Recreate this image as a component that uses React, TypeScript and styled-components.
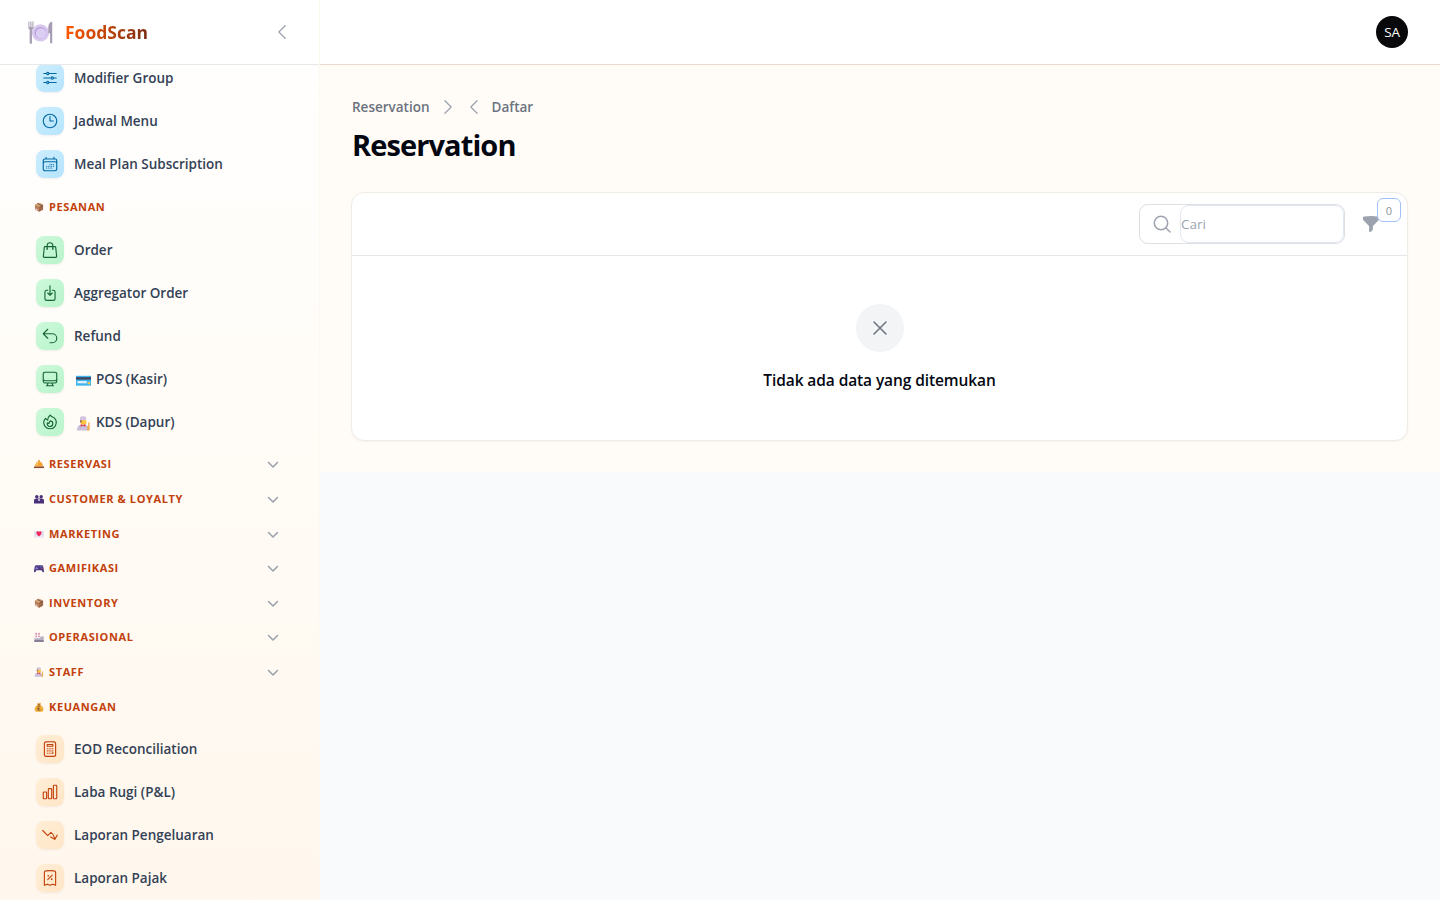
import React from 'react';
import styled, { createGlobalStyle, css } from 'styled-components';
import {
  HiOutlineAdjustmentsHorizontal,
  HiOutlineClock,
  HiOutlineCalendarDays,
  HiOutlineShoppingBag,
  HiOutlineArrowDownOnSquare,
  HiOutlineArrowUturnLeft,
  HiOutlineComputerDesktop,
  HiOutlineFire,
  HiOutlineCalculator,
  HiOutlineChartBar,
  HiOutlineArrowTrendingDown,
  HiOutlineReceiptPercent,
  HiOutlineChevronLeft,
  HiOutlineXMark,
  HiChevronDown,
  HiChevronLeft,
  HiChevronRight,
  HiFunnel,
} from 'react-icons/hi2';

const Global = createGlobalStyle`
  *, *::before, *::after { box-sizing: border-box; }
  html, body { margin: 0; height: 100%; overflow: hidden; }
  body {
    background: #f8fafc;
    font-family: 'Open Sans', 'Noto Sans', sans-serif;
    color: #030712;
  }
  button, input { font-family: inherit; }
`;

const Shell = styled.div`
  display: flex;
  width: 1440px;
  height: 900px;
  overflow: hidden;
`;

const Sidebar = styled.aside`
  display: flex;
  flex-direction: column;
  flex: 0 0 320px;
  border-right: 1px solid #fdf8f0;
  background: linear-gradient(180deg, #ffffff 0%, #fffcf7 45%, #fff7ed 100%);
`;

const SidebarHeader = styled.header`
  display: flex;
  align-items: center;
  flex: 0 0 65px;
  padding: 0 27px 0 28px;
  background: #fff;
  border-bottom: 1px solid #e8e8ea;
`;

const Brand = styled.span<{ $tracking: string }>`
  margin: 0 auto 0 12px;
  font-size: 17.5px;
  line-height: 28px;
  font-weight: 700;
  letter-spacing: ${(p) => p.$tracking};
  background: linear-gradient(90deg, #ff5a00, #7c2d12);
  background-clip: text;
  -webkit-background-clip: text;
  color: transparent;
`;

const CollapseButton = styled.button`
  display: flex;
  padding: 0;
  border: 0;
  background: none;
  color: #9ca3af;
`;

const Nav = styled.nav`
  flex: 1;
  min-height: 0;
  overflow: hidden;
`;

const NavScroll = styled.div`
  margin-top: -8.5px;
`;

const ItemList = styled.div`
  padding-bottom: 4px;
`;

const NavItem = styled.a`
  display: flex;
  align-items: center;
  height: 43px;
  padding-left: 36px;
  gap: 10px;
`;

type Tone = 'sky' | 'green' | 'orange';

const tones = {
  sky: css`background: linear-gradient(135deg, #cdeefe, #b5e4fd); color: #0369a1;`,
  green: css`background: linear-gradient(135deg, #cdf9db, #b9f4cc); color: #166534;`,
  orange: css`background: linear-gradient(135deg, #ffeed6, #ffe5c6); color: #c2410c;`,
};

const IconTile = styled.span<{ $tone: Tone }>`
  display: flex;
  align-items: center;
  justify-content: center;
  width: 28px;
  height: 28px;
  border-radius: 8px;
  box-shadow: 0 1px 2px rgba(120, 60, 20, 0.08);
  ${(p) => tones[p.$tone]}
`;

const ItemLabel = styled.span<{ $tracking?: number }>`
  display: flex;
  align-items: center;
  font-size: 13.5px;
  line-height: 20px;
  font-weight: 600;
  color: #334155;
  white-space: nowrap;
  letter-spacing: ${(p) => p.$tracking ?? 0}px;
`;

const InlineEmoji = styled.span`
  display: flex;
  margin: 3px 5px 0 2px;
`;

const GroupHeader = styled.div`
  display: flex;
  align-items: center;
  height: 34.6px;
  padding: 0 40px 0 34px;
`;

const GroupLabel = styled.span<{ $tracking?: number }>`
  margin: 0 auto 0 5px;
  font-size: 11px;
  line-height: 16px;
  font-weight: 700;
  color: #c2410c;
  white-space: nowrap;
  letter-spacing: ${(p) => p.$tracking ?? 0.6}px;
`;

const GroupChevron = styled.span`
  display: flex;
  margin-top: 2px;
  color: #9ca3af;
`;

const Main = styled.main`
  flex: 1;
  min-width: 0;
`;

const Topbar = styled.header`
  display: flex;
  align-items: center;
  justify-content: flex-end;
  height: 65px;
  padding: 0 32px;
  background: #fff;
  border-bottom: 1px solid #ead9d0;
`;

const Avatar = styled.span`
  display: flex;
  align-items: center;
  justify-content: center;
  width: 32px;
  height: 32px;
  border-radius: 50%;
  background: #09090b;
  color: #fff;
  font-size: 13.5px;
  letter-spacing: -0.2px;
`;

const Content = styled.section`
  height: 407px;
  padding: 32px 32px 0 31px;
  background: #fffcf7;
`;

const Breadcrumbs = styled.div`
  display: flex;
  align-items: center;
  height: 20px;
  padding-left: 1px;
  color: #9ca3af;
`;

const Crumb = styled.span<{ $tracking: number }>`
  font-size: 13.5px;
  line-height: 20px;
  font-weight: 600;
  color: #6b7280;
  letter-spacing: ${(p) => p.$tracking}px;
`;

const CrumbArrows = styled.span`
  display: flex;
  gap: 6px;
  margin: 0 8px;
`;

const Title = styled.h1`
  margin: 10px 0 0 1px;
  font-size: 29px;
  line-height: 36px;
  font-weight: 700;
  letter-spacing: -0.9px;
`;

const Card = styled.div`
  height: 249px;
  margin-top: 29px;
  background: #fff;
  border: 1px solid #f1ebe6;
  border-radius: 13px;
  box-shadow: 0 1px 2px rgba(0, 0, 0, 0.04);
`;

const Toolbar = styled.div`
  display: flex;
  align-items: center;
  justify-content: flex-end;
  height: 63px;
  padding: 0 26px 0 0;
  border-bottom: 1px solid #e5e7eb;
`;

const SearchBox = styled.label`
  display: flex;
  align-items: center;
  width: 206px;
  height: 40px;
  margin-right: 16px;
  border: 1px solid #dcdfe4;
  border-radius: 9px;
  color: #9ca3af;
  svg { margin: 0 8px 0 12px; }
`;

const SearchInput = styled.input`
  flex: 1;
  width: 0;
  height: 38px;
  padding: 0;
  border: 1px solid #e2e8f0;
  border-radius: 9px;
  outline: 0;
  background: #fff;
  font-size: 13.5px;
  color: #030712;
  &::placeholder { color: #9ca3af; opacity: 1; }
`;

const FilterButton = styled.button`
  position: relative;
  display: flex;
  padding: 0;
  border: 0;
  background: none;
  color: #9ca3af;
`;

const FilterBadge = styled.span`
  position: absolute;
  left: 16px;
  top: -16px;
  display: flex;
  align-items: center;
  justify-content: center;
  width: 24px;
  height: 24px;
  border: 1px solid #a3c1fb;
  border-radius: 6px;
  background: #fff;
  font-size: 11px;
  color: #8b919d;
`;

const Empty = styled.div`
  display: flex;
  flex-direction: column;
  align-items: center;
  padding-top: 48px;
`;

const EmptyIcon = styled.span`
  display: flex;
  align-items: center;
  justify-content: center;
  width: 48px;
  height: 48px;
  border-radius: 50%;
  background: #f3f4f6;
  color: #6b7280;
`;

const EmptyText = styled.p`
  margin: 16px 0 0;
  font-size: 15.5px;
  line-height: 24px;
  font-weight: 600;
  letter-spacing: -0.1px;
`;

type EmojiName =
  | 'plate' | 'box' | 'bell' | 'people' | 'letter' | 'game' | 'factory' | 'chef' | 'money' | 'card';

const emojiArt: Record<EmojiName, React.ReactNode> = {
  plate: (
    <>
      <circle cx="16" cy="16.5" r="11" fill="#d8c8ee" />
      <circle cx="16" cy="16.5" r="7.6" fill="#b9a2dc" />
      <circle cx="16.6" cy="17.2" r="6.6" fill="#dccdf3" />
      <path d="M0.5 2v8q0 2 1.6 2.6V29a1.5 1.5 0 0 0 3 0V12.600q1.900-.6 1.900-2.600V2H5.600v7H4.400V2H3v7H1.800V2z" fill="#aaa0b4" />
      <path d="M31 2q-5 1-5 8v7h2.300v12a1.400 1.400 0 0 0 2.700 0z" fill="#a79bb3" />
    </>
  ),
  box: (
    <>
      <path d="M3 9 15 2l14 6v16l-13 7L3 24z" fill="#b98058" />
      <path d="M3 9 15 2l14 6-13 7z" fill="#d9a77d" />
      <path d="M16 15 29 8v16l-13 7z" fill="#a06a4c" />
      <path d="m9 5.500 13 6v6l4-2V10L13 4z" fill="#79513f" />
      <path d="M5 20l6 3v5l-6-3z" fill="#e8cfe4" />
    </>
  ),
  bell: (
    <>
      <circle cx="16" cy="6" r="3" fill="#dd8a24" />
      <path d="M3 24C4 13 9 8 16 8s12 5 13 16z" fill="#f7a333" />
      <path d="M7 20c1-6 3-9 7-10-2 4-2 7-2 10z" fill="#ffd07a" />
      <path d="M0 24h32v5H0z" fill="#8d4a2c" />
    </>
  ),
  people: (
    <>
      <circle cx="9" cy="9" r="5.500" fill="#4b2f78" />
      <circle cx="23" cy="9" r="5.500" fill="#4b2f78" />
      <path d="M0 30V20q0-6 8-6h16q8 0 8 6v10z" fill="#48307a" />
      <path d="M14 16h4v6h-4z" fill="#fff" />
    </>
  ),
  letter: (
    <>
      <path d="M1 6h30v21H1z" fill="#dedbea" />
      <path d="m1 27 13-12h4l13 12z" fill="#ece9f5" />
      <path d="M16 24C4 15 8 7 12 7q3 0 4 3 1-3 4-3c4 0 8 8-4 17z" fill="#f2265c" />
    </>
  ),
  game: (
    <>
      <path d="M6 7h20q5 0 6 22-5 2-8-6H8Q5 31 0 29 1 7 6 7z" fill="#4b3a85" />
      <path d="M7 12h3v3h3v3h-3v3H7v-3H4v-3h3z" fill="#8e83c8" />
      <circle cx="22" cy="12" r="2" fill="#4ba3e8" />
      <circle cx="26" cy="17" r="2.400" fill="#e4355f" />
    </>
  ),
  factory: (
    <>
      <path d="M5 1h4v19H5zM14 1h4v19h-4z" fill="#ece5ee" />
      <path d="M5 4h4v4H5zM14 4h4v4h-4zM5 12h4v3H5zM14 12h4v3h-4z" fill="#d5426d" />
      <path d="M1 20h19v-6h11v16H1z" fill="#b6afc2" />
      <path d="M1 27h30v4H1z" fill="#645974" />
    </>
  ),
  chef: (
    <>
      <path d="M8 2q7-3 14 0l-1 8H9z" fill="#d0c5dd" />
      <path d="M9 9h13v7q-6 8-12 0z" fill="#ffc43b" />
      <path d="M9 9h3v5H9z" fill="#805060" />
      <path d="M2 31q0-12 10-13h7q8 1 8 13z" fill="#cabfda" />
      <path d="m10 17 5 3 5-3v6l-5-2-5 2z" fill="#e3314f" />
      <path d="M26 14h3v17h-5v-9h2z" fill="#f2a94a" />
    </>
  ),
  money: (
    <>
      <path d="m11 3 5 2 6-3-3 8h-7z" fill="#d98925" />
      <path d="M11 9h10c6 5 10 10 9 17q-1 5-7 5H8q-6 0-6-6C2 18 6 13 11 9z" fill="#efad37" />
      <path d="M12 8h8v3h-8z" fill="#8a5431" />
      <path d="M19 15c-6-2-7 3-6 6v5h8M11 21h7" fill="none" stroke="#704b31" strokeWidth="2.400" />
    </>
  ),
  card: (
    <>
      <path d="M0 6h32v21H0z" fill="#3cb4ef" />
      <path d="M0 9h32v5H0z" fill="#454056" />
      <path d="M3 17h20v5H3z" fill="#e3eefa" />
      <path d="M25 19h5v5h-5z" fill="#ffc24b" />
    </>
  ),
};

const Emoji = ({ name, size }: { name: EmojiName; size: number }) => (
  <svg width={size} height={size} viewBox="0 0 32 32" aria-hidden="true">
    {emojiArt[name]}
  </svg>
);

interface ItemData {
  label: string;
  icon: React.ComponentType<{ size?: number }>;
  emoji?: EmojiName;
  tracking?: number;
}

const Items = ({ tone, items }: { tone: Tone; items: ItemData[] }) => (
  <ItemList>
    {items.map(({ label, icon: Icon, emoji, tracking }) => (
      <NavItem key={label}>
        <IconTile $tone={tone}><Icon size={18} /></IconTile>
        <ItemLabel $tracking={tracking}>
          {emoji && <InlineEmoji><Emoji name={emoji} size={15} /></InlineEmoji>}
          {label}
        </ItemLabel>
      </NavItem>
    ))}
  </ItemList>
);

interface GroupData {
  label: string;
  emoji: EmojiName;
  tracking?: number;
  collapsed?: boolean;
}

const Group = ({ label, emoji, tracking, collapsed = false }: GroupData) => (
  <GroupHeader>
    <Emoji name={emoji} size={10} />
    <GroupLabel $tracking={tracking}>{label}</GroupLabel>
    {collapsed && <GroupChevron><svg width="12" height="8" viewBox="0 0 12 8" fill="none" stroke="currentColor" strokeWidth="1.6" strokeLinecap="round" strokeLinejoin="round"><path d="M1.500 1.500 6 6l4.500-4.500" /></svg></GroupChevron>}
  </GroupHeader>
);

const menuItems: ItemData[] = [
  { label: 'Modifier Group', icon: HiOutlineAdjustmentsHorizontal },
  { label: 'Jadwal Menu', icon: HiOutlineClock },
  { label: 'Meal Plan Subscription', icon: HiOutlineCalendarDays },
];

const orderItems: ItemData[] = [
  { label: 'Order', icon: HiOutlineShoppingBag },
  { label: 'Aggregator Order', icon: HiOutlineArrowDownOnSquare },
  { label: 'Refund', icon: HiOutlineArrowUturnLeft },
  { label: 'POS (Kasir)', icon: HiOutlineComputerDesktop, emoji: 'card' },
  { label: 'KDS (Dapur)', icon: HiOutlineFire, emoji: 'chef' },
];

const financeItems: ItemData[] = [
  { label: 'EOD Reconciliation', icon: HiOutlineCalculator },
  { label: 'Laba Rugi (P&L)', icon: HiOutlineChartBar },
  { label: 'Laporan Pengeluaran', icon: HiOutlineArrowTrendingDown },
  { label: 'Laporan Pajak', icon: HiOutlineReceiptPercent },
];

const collapsedGroups: GroupData[] = [
  { label: 'RESERVASI', emoji: 'bell' },
  { label: 'CUSTOMER & LOYALTY', emoji: 'people' },
  { label: 'MARKETING', emoji: 'letter' },
  { label: 'GAMIFIKASI', emoji: 'game' },
  { label: 'INVENTORY', emoji: 'box' },
  { label: 'OPERASIONAL', emoji: 'factory' },
  { label: 'STAFF', emoji: 'chef' },
];

export default function App() {
  return (
    <>
      <Global />
      <Shell>
        <Sidebar>
          <SidebarHeader>
            <Emoji name="plate" size={25} />
            <Brand $tracking="0px">FoodScan</Brand>
            <CollapseButton aria-label="Collapse sidebar"><HiOutlineChevronLeft size={20} /></CollapseButton>
          </SidebarHeader>
          <Nav>
            <NavScroll>
              <Items tone="sky" items={menuItems} />
              <Group label="PESANAN" emoji="box" />
              <div style={{ height: 4 }} />
              <Items tone="green" items={orderItems} />
              {collapsedGroups.map((g) => <Group key={g.label} {...g} collapsed />)}
              <Group label="KEUANGAN" emoji="money" />
              <div style={{ height: 4 }} />
              <Items tone="orange" items={financeItems} />
            </NavScroll>
          </Nav>
        </Sidebar>
        <Main>
          <Topbar><Avatar>SA</Avatar></Topbar>
          <Content>
            <Breadcrumbs>
              <Crumb $tracking={0}>Reservation</Crumb>
              <CrumbArrows><HiChevronRight size={20} /><HiChevronLeft size={20} /></CrumbArrows>
              <Crumb $tracking={0}>Daftar</Crumb>
            </Breadcrumbs>
            <Title>Reservation</Title>
            <Card>
              <Toolbar>
                <SearchBox>
                  <svg width="20" height="20" viewBox="0 0 20 20" fill="none" stroke="currentColor" strokeWidth="1.500" strokeLinecap="round"><circle cx="9" cy="9" r="6.700" /><path d="m14 14 4 4" /></svg>
                  <SearchInput placeholder="Cari" />
                </SearchBox>
                <FilterButton aria-label="Filter"><HiFunnel size={20} /><FilterBadge>0</FilterBadge></FilterButton>
              </Toolbar>
              <Empty>
                <EmptyIcon><HiOutlineXMark size={24} /></EmptyIcon>
                <EmptyText>Tidak ada data yang ditemukan</EmptyText>
              </Empty>
            </Card>
          </Content>
        </Main>
      </Shell>
    </>
  );
}
